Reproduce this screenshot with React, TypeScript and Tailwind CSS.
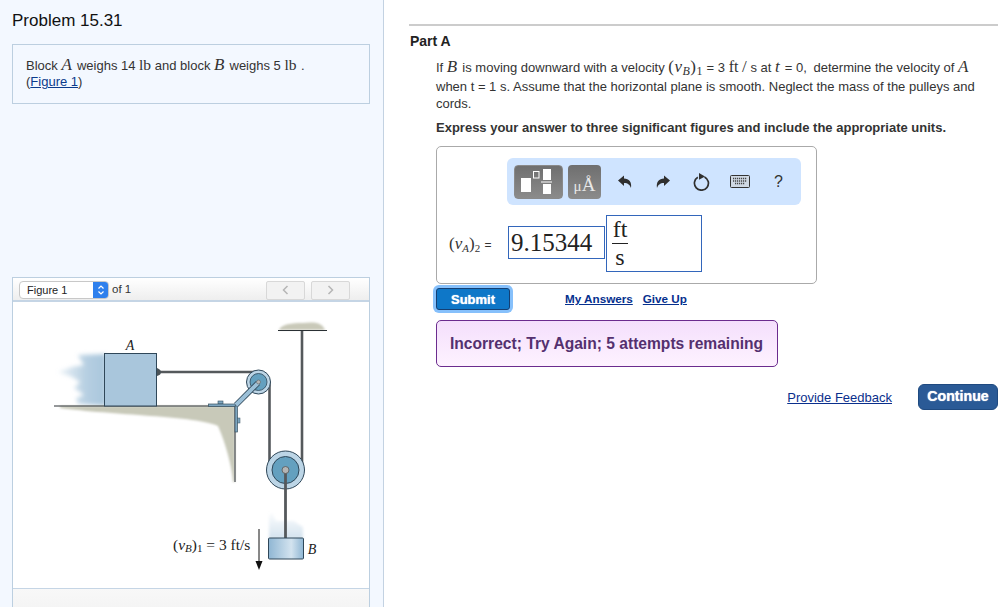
import React from "react";

const serif = "font-['Liberation_Serif',serif]";

function Mv({ children }: { children: React.ReactNode }) {
  return <span className={`${serif} italic text-[17px] leading-none pr-[1.500px]`}>{children}</span>;
}

function Figure() {
  return (
    <svg width={356} height={286} viewBox="13 303 356 286" className="block">
      <defs>
        <filter id="b1" x="-30%" y="-30%" width="160%" height="160%"><feGaussianBlur stdDeviation="2" /></filter>
        <filter id="b2" x="-30%" y="-30%" width="160%" height="160%"><feGaussianBlur stdDeviation="1" /></filter>
        <filter id="b3" x="-30%" y="-30%" width="160%" height="160%"><feGaussianBlur stdDeviation="1.500" /></filter>
        <linearGradient id="blurA" x1="0" x2="1" y1="0" y2="0">
          <stop offset="0" stopColor="#a9c6dc" stopOpacity="0.2" />
          <stop offset="0.6" stopColor="#a9c6dc" stopOpacity="0.85" />
          <stop offset="1" stopColor="#a9c6dc" />
        </linearGradient>
        <linearGradient id="blurB" x1="0" x2="0" y1="0" y2="1">
          <stop offset="0" stopColor="#d9e6f0" stopOpacity="0.1" />
          <stop offset="1" stopColor="#d3e2ee" />
        </linearGradient>
        <linearGradient id="blockB" x1="0" x2="1" y1="0" y2="0">
          <stop offset="0" stopColor="#8fb6d3" />
          <stop offset="0.65" stopColor="#d3e3ef" />
          <stop offset="1" stopColor="#8fb6d3" />
        </linearGradient>
      </defs>
      <path d="M78 356 L106 355 V407 L78 405 L76 399 L84 396 L74 389 L80 383 L72 378 L58 373 L72 368 L84 366 L80 360 Z" fill="url(#blurA)" filter="url(#b1)" />
      <path d="M60 407 H235 V483 H233 C232 468 226 445 218 427 C198 417 110 416 60 409 Z" fill="#c8c9b9" filter="url(#b2)" />
      <path d="M279 331 C281 325 292 324 303 324 C313 323 322 323 325 331 Z" fill="#c9c9b9" filter="url(#b2)" />
      <line x1="54" y1="407" x2="235" y2="407" stroke="#2a3034" strokeWidth="1" />
      <line x1="235" y1="407" x2="235" y2="483" stroke="#6c7072" strokeWidth="1.600" />
      <rect x="218" y="402" width="5" height="3" fill="#7ea6c0" stroke="#37505f" strokeWidth="0.600" />
      <rect x="208.500" y="405" width="27" height="2.500" fill="#7ea6c0" stroke="#37505f" strokeWidth="0.700" />
      <rect x="235" y="407" width="2.500" height="26" fill="#7ea6c0" stroke="#37505f" strokeWidth="0.700" />
      <rect x="237.500" y="419" width="2.500" height="5" fill="#7ea6c0" stroke="#37505f" strokeWidth="0.500" />
      <line x1="157" y1="373" x2="258" y2="373" stroke="#55595c" strokeWidth="2.600" />
      <line x1="269.500" y1="383" x2="269.500" y2="470" stroke="#55595c" strokeWidth="2.600" />
      <line x1="302" y1="331" x2="302" y2="470" stroke="#55595c" strokeWidth="2.600" />
      <line x1="278" y1="331.500" x2="327" y2="331.500" stroke="#2a3034" strokeWidth="1" />
      <rect x="104.500" y="354.500" width="52" height="52.500" fill="#a9c6dc" stroke="#2f4759" strokeWidth="1" />
      <path d="M157 369 C160 370 161 372 161 373 C161 375 160 376 157 377 Z" fill="#4b5358" />
      <circle cx="258.500" cy="383" r="12" fill="#bcd5e6" stroke="#2f4759" strokeWidth="1" />
      <circle cx="258.500" cy="383" r="8.500" fill="#64a0bf" stroke="#2f4759" strokeWidth="0.800" />
      <line x1="236" y1="406" x2="258" y2="384" stroke="#2f4759" strokeWidth="5.500" />
      <line x1="236" y1="406" x2="258" y2="384" stroke="#9cc0d8" strokeWidth="4" />
      <circle cx="258.500" cy="383" r="2" fill="#b8b8b8" stroke="#555" strokeWidth="0.500" />
      <circle cx="285.500" cy="471" r="19" fill="#bcd5e6" stroke="#2f4759" strokeWidth="1" />
      <circle cx="285.500" cy="471" r="13.500" fill="#64a0bf" stroke="#2f4759" strokeWidth="1" />
      <path d="M269 540 V517 L272 513 L276 522 H294 L298 525 L303 528 V540 Z" fill="url(#blurB)" filter="url(#b3)" />
      <line x1="285.500" y1="471" x2="285.500" y2="539" stroke="#55595c" strokeWidth="2.800" />
      <circle cx="285.500" cy="471" r="3.500" fill="#b5b5b5" stroke="#555" strokeWidth="0.800" />
      <rect x="268.500" y="539" width="35" height="21" rx="1" fill="url(#blockB)" stroke="#2f4759" strokeWidth="1" />
      <line x1="259" y1="530" x2="259" y2="565" stroke="#111" strokeWidth="1" />
      <path d="M255.500 562 L259 571 L262.500 562 Z" fill="#111" />
      <g fontFamily="'Liberation Serif',serif" fill="#222">
        <text x="130" y="351" fontSize="14" fontStyle="italic" textAnchor="middle">A</text>
        <text x="312" y="555" fontSize="14" fontStyle="italic" textAnchor="middle">B</text>
        <text x="173" y="551" fontSize="15.500">
          (<tspan fontStyle="italic">v</tspan><tspan fontStyle="italic" fontSize="11" dy="2">B</tspan><tspan dy="-2">)</tspan><tspan fontSize="11" dy="2">1</tspan><tspan dy="-2"> = 3 ft/s</tspan>
        </text>
      </g>
    </svg>
  );
}

function Toolbar() {
  return (
    <div className="ml-[70px] w-[294px] h-[47px] bg-[#cfe4ff] rounded-[6px] flex items-center pl-[7px]">
      <div className="w-[49px] h-[34px] rounded-[4px] bg-gradient-to-b from-[#6f6f6f] to-[#8b8b8b] border border-[#8a8a8a]">
        <svg width={47} height={32} viewBox="515 165 47 32" className="block">
          <rect x="521" y="177" width="10" height="14" fill="#fff" />
          <rect x="533.500" y="170.500" width="5.500" height="6.500" fill="none" stroke="#fff" strokeWidth="1" />
          <rect x="543" y="168" width="8" height="11" fill="#fff" />
          <rect x="541" y="180.500" width="11" height="1" fill="#fff" />
          <rect x="543" y="183" width="8" height="10" fill="#fff" />
        </svg>
      </div>
      <div className={`ml-[5px] w-[33px] h-[34px] rounded-[4px] bg-gradient-to-b from-[#6f6f6f] to-[#8b8b8b] flex items-end justify-center pb-[5px] text-[#e8e8e8] ${serif} leading-none`}>
        <span className="text-[15px]">μ</span><span className="text-[19px]">Å</span>
      </div>
      <svg width={16} height={16} viewBox="0 0 16 16" className="ml-[16px]">
        <path d="M1 6.500 L7 1.500 V4.500 C12 4.500 15 8 14 14 C13 11 11 9 7 9 V12 Z" fill="#2f2f2f" />
      </svg>
      <svg width={16} height={16} viewBox="0 0 16 16" className="ml-[22px]">
        <path d="M15 6.500 L9 1.500 V4.500 C4 4.500 1 8 2 14 C3 11 5 9 9 9 V12 Z" fill="#2f2f2f" />
      </svg>
      <svg width={18} height={18} viewBox="0 0 18 18" className="ml-[21px]">
        <path d="M5.800 4.200 A7 7 0 1 0 12.500 3.900" fill="none" stroke="#2f2f2f" strokeWidth="1.700" />
        <path d="M7 0 L13 3.500 L7 6.800 Z" fill="#2f2f2f" />
      </svg>
      <svg width={20} height={13} viewBox="0 0 20 13" className="ml-[20px]">
        <rect x="0.500" y="0.500" width="19" height="12" rx="1" fill="#cfd8e3" stroke="#333" />
        <path d="M3 3.500 H17 M3 6 H17 M5 8.500 H15" stroke="#444" strokeWidth="1.300" strokeDasharray="1.200 0.800" />
      </svg>
      <span className="ml-[24px] w-[10px] text-[16px] leading-none text-[#333] font-['Liberation_Sans',sans-serif]">?</span>
    </div>
  );
}

export default function App() {
  return (
    <div className="flex w-[1007px] h-[607px] overflow-hidden bg-white font-['Liberation_Sans',sans-serif]">
      <aside className="w-[384px] shrink-0 h-full bg-[#f3f8ff] border-r border-[#c3d2e2] pl-[12px] pt-[10px]">
        <h1 className="text-[17px] leading-[21px] text-[#111]">Problem 15.31</h1>
        <div className="mt-[13px] w-[358px] h-[60px] border border-[#bccfe0] pl-[13px] pt-[11px] text-[13px] leading-[16px] text-[#333]">
          <div className="h-[18px] whitespace-nowrap">
            Block <Mv>A</Mv> weighs 14 <span className={`${serif} text-[15.500px] leading-none`}>lb</span> and block <Mv>B</Mv> weighs 5 <span className={`${serif} text-[15.500px] leading-none pr-[1px]`}>lb</span> .
          </div>
          <div>
            (<span className="text-[#0b3b8c] underline">Figure 1</span>)
          </div>
        </div>
        <div className="mt-[173px] w-[358px] h-[340px] border border-[#bccfe0] bg-white">
          <div className="h-[24px] border-b-2 border-[#c5d5e5] bg-gradient-to-b from-white to-[#eeeeee] flex items-center pl-[6px] pt-[2px]">
            <div className="w-[90px] h-[18px] shrink-0 rounded-[4px] bg-white border border-[#c8c8c8] flex items-center overflow-hidden">
              <span className="flex-1 pl-[7px] text-[11px] leading-none text-[#222]">Figure 1</span>
              <span className="w-[15px] h-full bg-[#2f80ed] flex items-center justify-center">
                <svg width={8} height={12} viewBox="0 0 8 12">
                  <path d="M1.500 4.500 L4 2 L6.500 4.500 M1.500 7.500 L4 10 L6.500 7.500" fill="none" stroke="#fff" strokeWidth="1.200" />
                </svg>
              </span>
            </div>
            <span className="ml-[3px] w-[20px] shrink-0 whitespace-nowrap text-[11.500px] text-[#333]">of 1</span>
            <div className="ml-[134px] w-[39px] h-[19px] shrink-0 border border-[#d8d8d8] rounded-[2px] bg-[#f2f2f2] flex items-center justify-center">
              <svg width={7} height={10} viewBox="0 0 7 10"><path d="M5.500 1 L1.500 5 L5.500 9" fill="none" stroke="#b5b5b5" strokeWidth="1.500" /></svg>
            </div>
            <div className="ml-[6px] w-[39px] h-[19px] shrink-0 border border-[#d8d8d8] rounded-[2px] bg-[#f2f2f2] flex items-center justify-center">
              <svg width={7} height={10} viewBox="0 0 7 10"><path d="M1.500 1 L5.500 5 L1.500 9" fill="none" stroke="#b5b5b5" strokeWidth="1.500" /></svg>
            </div>
          </div>
          <Figure />
          <div className="h-[28px] border-t border-[#c5d5e5] bg-gradient-to-b from-[#f8f8f8] to-[#f3f3f3]" />
        </div>
      </aside>

      <main className="w-[623px] min-w-0 pl-[25px] pr-[9px] pt-[24px]">
        <div className="h-[2px] bg-[#cccccc]" />
        <h2 className="mt-[7px] pl-[1px] text-[14px] leading-[16px] font-bold text-[#222]">Part A</h2>
        <div className="ml-[27px] mt-[9px] w-[560px] text-[13px] leading-[17px] text-[#333]">
          <p className="h-[20px] whitespace-nowrap">
            If <Mv>B</Mv> is moving downward with a velocity <span className={`${serif} text-[17px] leading-none tracking-[0.5px]`}>(<i>v</i><sub className="text-[12px] italic">B</sub>)<sub className="text-[12px]">1</sub></span> = 3 <span className={`${serif} text-[16px] leading-none`}>ft</span> <span className={`${serif} text-[17px] leading-none`}>/</span> s at <Mv>t</Mv> = 0, <span className="pl-[3px]">determine the velocity of</span> <Mv>A</Mv>
          </p>
          <p>when t = 1 s. Assume that the horizontal plane is smooth. Neglect the mass of the pulleys and</p>
          <p>cords.</p>
          <p className="mt-[7px] font-bold text-[#333]">Express your answer to three significant figures and include the appropriate units.</p>
        </div>

        <div className="ml-[27px] mt-[10px] w-[381px] h-[138px] border border-[#aaaaaa] rounded-[5px] pt-[11px]">
          <Toolbar />
          <div className="mt-[10px] ml-[12px] flex items-center">
            <span className={`w-[59px] whitespace-nowrap text-[#333] ${serif} text-[17px] leading-none`}>
              (<i>v</i><sub className="text-[11px] italic">A</sub>)<sub className="text-[11px]">2</sub> <span className="font-['Liberation_Sans',sans-serif] text-[12px]">=</span>
            </span>
            <div className={`w-[97px] h-[33px] mb-[2px] border border-[#3366bb] flex items-center pl-[2px] text-[25px] leading-none text-[#222] ${serif}`}>9.15344</div>
            <div className={`ml-[1px] w-[96px] h-[57px] border border-[#3366bb] pl-[5px] ${serif} text-[#222]`}>
              <div className="w-[16px] text-center text-[24px] leading-[27px] border-b border-[#222]">ft</div>
              <div className="w-[16px] text-center text-[24px] leading-[27px]">s</div>
            </div>
          </div>
        </div>

        <div className="ml-[25px] mt-[1px] flex items-center h-[28px]">
          <button className="ml-[2px] w-[74px] h-[22px] rounded-[3px] bg-[#0e77c8] border border-[#143f73] ring-3 ring-[#86c0fb] text-white text-[13px] leading-none font-bold [text-shadow:0_0_1px_#ffffff]">Submit</button>
          <a className="ml-[55px] text-[11.700px] font-bold text-[#06308e] underline">My Answers</a>
          <a className="ml-[10px] text-[11.700px] font-bold text-[#06308e] underline">Give Up</a>
        </div>

        <div className="ml-[27px] mt-[7px] w-[342px] h-[47px] rounded-[5px] border border-[#6b2c8e] bg-gradient-to-b from-[#f4dffc] to-[#fef2ff] flex items-center pl-[13px] text-[15.600px] font-bold text-[#54306f]">
          Incorrect; Try Again; 5 attempts remaining
        </div>

        <div className="mt-[17px] flex items-center justify-end h-[26px]">
          <a className="pt-[1px] text-[13px] text-[#0a2f8c] underline">Provide Feedback</a>
          <button className="ml-[26px] w-[80px] h-[26px] rounded-[6px] bg-[#2a5a96] border border-[#1f4a80] text-white text-[14.200px] font-bold [text-shadow:0_0_1px_#ffffff]">Continue</button>
        </div>
      </main>
    </div>
  );
}
